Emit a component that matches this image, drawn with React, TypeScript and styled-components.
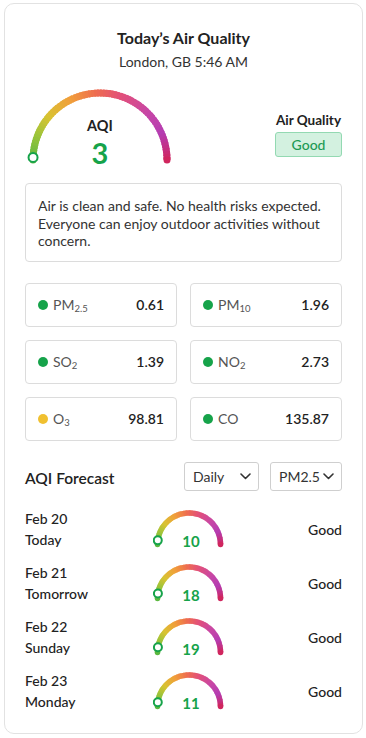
import React from 'react';
import styled, { createGlobalStyle } from 'styled-components';

const GlobalStyle = createGlobalStyle`
  html, body {
    margin: 0;
    padding: 0;
    background: #ffffff;
  }
  body {
    font-family: Lato, "Noto Sans", "Liberation Sans", sans-serif;
    color: #222222;
    -webkit-font-smoothing: antialiased;
  }
  * {
    box-sizing: border-box;
  }
`;

const GREEN = '#16a34a';

const stops: [number, string][] = [
  [0, '#5cb840'],
  [0.12, '#9cc43a'],
  [0.22, '#d8c332'],
  [0.35, '#f0a03a'],
  [0.48, '#ee6d50'],
  [0.6, '#e2507a'],
  [0.75, '#c747a6'],
  [0.87, '#b53db2'],
  [1, '#d0265e'],
];

const hex = (c: string) => [1, 3, 5].map((i) => parseInt(c.slice(i, i + 2), 16));

const colorAt = (t: number) => {
  for (let i = 0; i < stops.length - 1; i++) {
    const [t0, c0] = stops[i];
    const [t1, c1] = stops[i + 1];
    if (t >= t0 && t <= t1) {
      const k = (t - t0) / (t1 - t0);
      const a = hex(c0);
      const b = hex(c1);
      const mix = a.map((v, j) => Math.round(v + (b[j] - v) * k));
      return `rgb(${mix.join(',')})`;
    }
  }
  return stops[stops.length - 1][1];
};

interface GaugeProps {
  width: number;
  height: number;
  cx: number;
  cy: number;
  r: number;
  stroke: number;
  marker: number;
  markerR: number;
  children?: React.ReactNode;
}

const point = (cx: number, cy: number, r: number, t: number) => {
  const a = Math.PI * (1 - t);
  return [cx + r * Math.cos(a), cy - r * Math.sin(a)];
};

const Gauge = ({ width, height, cx, cy, r, stroke, marker, markerR, children }: GaugeProps) => {
  const n = 72;
  const segs = [];
  for (let i = 0; i < n; i++) {
    const t0 = i / n;
    const t1 = Math.min(1, (i + 1.6) / n);
    const [x0, y0] = point(cx, cy, r, t0);
    const [x1, y1] = point(cx, cy, r, t1);
    segs.push(
      <path
        key={i}
        d={`M${x0} ${y0} A${r} ${r} 0 0 1 ${x1} ${y1}`}
        stroke={colorAt((i + 0.5) / n)}
        strokeWidth={stroke}
        fill="none"
      />
    );
  }
  const [sx, sy] = point(cx, cy, r, 0);
  const [ex, ey] = point(cx, cy, r, 1);
  const [mx, my] = point(cx, cy, r, marker);
  return (
    <svg width={width} height={height} viewBox={`0 0 ${width} ${height}`}>
      {segs}
      <circle cx={sx} cy={sy} r={stroke / 2} fill={colorAt(0)} />
      <circle cx={ex} cy={ey} r={stroke / 2} fill={colorAt(1)} />
      <circle cx={mx} cy={my} r={markerR} fill="#ffffff" stroke={GREEN} strokeWidth={2} />
      {children}
    </svg>
  );
};

const Card = styled.div`
  margin: 3px 0 0 4px;
  width: 359px;
  height: 731px;
  border: 1px solid #e2e2e2;
  border-radius: 10px;
  padding: 23px 20px 20px;
  display: flex;
  flex-direction: column;
`;

const Title = styled.h1`
  margin: 0;
  text-align: center;
  font-size: 16px;
  line-height: 22px;
  font-weight: 700;
  color: #222;
`;

const Subtitle = styled.div`
  margin-top: 4px;
  text-align: center;
  font-size: 14px;
  line-height: 18px;
  color: #333;
`;

const Summary = styled.div`
  margin-top: 16px;
  display: flex;
  justify-content: space-between;
  align-items: flex-start;
`;

const QualityBlock = styled.div`
  width: 67px;
  margin-top: 25px;
  display: flex;
  flex-direction: column;
  align-items: center;
  gap: 4px;
`;

const QualityLabel = styled.div`
  font-size: 13.5px;
  line-height: 16px;
  font-weight: 700;
  color: #222;
  white-space: nowrap;
`;

const Badge = styled.div`
  width: 100%;
  height: 25px;
  display: flex;
  align-items: center;
  justify-content: center;
  background: #d3f1e0;
  border: 1px solid #93d9b2;
  border-radius: 3px;
  color: #1d9a55;
  font-size: 14px;
  font-weight: 500;
`;

const Description = styled.p`
  margin: 10px 0 0;
  padding: 13px 12px 11px;
  border: 1px solid #dcdcdc;
  border-radius: 4px;
  font-size: 14px;
  line-height: 17.5px;
  color: #333;
`;

const PollutantGrid = styled.div`
  margin-top: 21px;
  display: grid;
  grid-template-columns: 1fr 1fr;
  gap: 13px;
`;

const PollutantBox = styled.div`
  height: 44px;
  padding: 0 12px;
  border: 1px solid #dcdcdc;
  border-radius: 4px;
  display: flex;
  align-items: center;
`;

const Dot = styled.span<{ $color: string }>`
  width: 10px;
  height: 10px;
  border-radius: 50%;
  background: ${({ $color }) => $color};
  flex-shrink: 0;
`;

const PollutantName = styled.span`
  margin-left: 5px;
  font-size: 14px;
  color: #555;
  flex: 1;
`;

const Sub = styled.sub`
  font-size: 9.5px;
  vertical-align: -2px;
  line-height: 0;
`;

const PollutantValue = styled.span`
  font-size: 14px;
  font-weight: 600;
  color: #222;
`;

const ForecastHeader = styled.div`
  margin-top: 21px;
  display: flex;
  align-items: center;
  gap: 11px;
`;

const ForecastTitle = styled.h2`
  margin: 0;
  flex: 1;
  font-size: 15.5px;
  line-height: 20px;
  padding-top: 3px;
  font-weight: 600;
  color: #222;
`;

const Select = styled.div<{ $width: number }>`
  width: ${({ $width }) => $width}px;
  height: 29px;
  padding: 0 7px 0 8px;
  border: 1px solid #cfcfcf;
  border-radius: 3px;
  display: flex;
  align-items: center;
  justify-content: space-between;
  font-size: 14px;
  color: #333;
`;

const ForecastList = styled.div`
  margin-top: 17px;
  display: flex;
  flex-direction: column;
  gap: 11px;
`;

const ForecastRow = styled.div`
  display: grid;
  grid-template-columns: 128px 72px 1fr;
  align-items: center;
  height: 43px;
`;

const DateCol = styled.div`
  display: flex;
  flex-direction: column;
  font-size: 14px;
  line-height: 21.5px;
  font-weight: 500;
  color: #222;
`;

const RowStatus = styled.div`
  text-align: right;
  font-size: 14px;
  font-weight: 500;
  color: #222;
`;

const Chevron = () => (
  <svg width="11" height="7" viewBox="0 0 11 7">
    <path d="M1 1l4.5 4.5L10 1" stroke="#333" strokeWidth="1.6" fill="none" strokeLinecap="round" strokeLinejoin="round" />
  </svg>
);

const pollutants: { name: React.ReactNode; value: string; color: string }[] = [
  { name: <>PM<Sub>2.5</Sub></>, value: '0.61', color: GREEN },
  { name: <>PM<Sub>10</Sub></>, value: '1.96', color: GREEN },
  { name: <>SO<Sub>2</Sub></>, value: '1.39', color: GREEN },
  { name: <>NO<Sub>2</Sub></>, value: '2.73', color: GREEN },
  { name: <>O<Sub>3</Sub></>, value: '98.81', color: '#f0c030' },
  { name: <>CO</>, value: '135.87', color: GREEN },
];

const forecast = [
  { date: 'Feb 20', day: 'Today', value: 10 },
  { date: 'Feb 21', day: 'Tomorrow', value: 18 },
  { date: 'Feb 22', day: 'Sunday', value: 19 },
  { date: 'Feb 23', day: 'Monday', value: 11 },
];

const App = () => (
  <>
    <GlobalStyle />
    <Card>
      <Title>Today’s Air Quality</Title>
      <Subtitle>London, GB 5:46 AM</Subtitle>

      <Summary>
        <Gauge width={150} height={86} cx={75} cy={73} r={67} stroke={7} marker={0.012} markerR={4.5}>
          <text x={75} y={38.5} textAnchor="middle" dominantBaseline="central" fontSize="14.5" fontWeight="700" fill="#222">
            AQI
          </text>
          <text x={75} y={65} textAnchor="middle" dominantBaseline="central" fontSize="29" fontWeight="700" fill={GREEN}>
            3
          </text>
        </Gauge>
        <QualityBlock>
          <QualityLabel>Air Quality</QualityLabel>
          <Badge>Good</Badge>
        </QualityBlock>
      </Summary>

      <Description>
        Air is clean and safe. No health risks expected. Everyone can enjoy outdoor activities without concern.
      </Description>

      <PollutantGrid>
        {pollutants.map((p, i) => (
          <PollutantBox key={i}>
            <Dot $color={p.color} />
            <PollutantName>{p.name}</PollutantName>
            <PollutantValue>{p.value}</PollutantValue>
          </PollutantBox>
        ))}
      </PollutantGrid>

      <ForecastHeader>
        <ForecastTitle>AQI Forecast</ForecastTitle>
        <Select $width={75}>
          Daily <Chevron />
        </Select>
        <Select $width={72}>
          PM2.5 <Chevron />
        </Select>
      </ForecastHeader>

      <ForecastList>
        {forecast.map((f) => (
          <ForecastRow key={f.date}>
            <DateCol>
              <span>{f.date}</span>
              <span>{f.day}</span>
            </DateCol>
            <Gauge width={72} height={43} cx={36} cy={36.5} r={31.5} stroke={5.5} marker={0.03 + f.value * 0.0012} markerR={4}>
              <text x={38} y={32.5} textAnchor="middle" dominantBaseline="central" fontSize="15" fontWeight="700" fill={GREEN}>
                {f.value}
              </text>
            </Gauge>
            <RowStatus>Good</RowStatus>
          </ForecastRow>
        ))}
      </ForecastList>
    </Card>
  </>
);

export default App;
